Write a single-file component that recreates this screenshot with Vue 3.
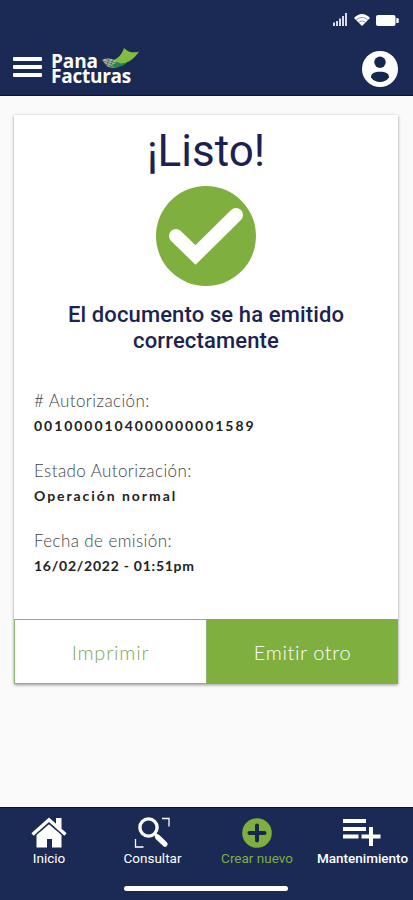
<script setup>
/**
 * @fileoverview Pantalla de confirmación de documento emitido.
 */

/** Datos del documento */
const fields = [
  { key: 'auth', label: '# Autorización:', value: '0010000104000000001589' },
  { key: 'status', label: 'Estado Autorización:', value: 'Operación normal' },
  { key: 'date', label: 'Fecha de emisión:', value: '16/02/2022 - 01:51pm' },
]

/** Opciones de la barra inferior */
const tabs = [
  { key: 'home', label: 'Inicio' },
  { key: 'search', label: 'Consultar' },
  { key: 'create', label: 'Crear nuevo', active: true },
  { key: 'manage', label: 'Mantenimiento' },
]
</script>

<template>
  <div class="screen">
    <header class="header">
      <div class="status">
        <svg class="signal" viewBox="0 0 14 13" fill="currentColor">
          <path d="M0 9.5h2V13H0zM3 8h2v5H3zM6 5.5h2V13H6zM9 3h2v10H9zM12 0h2v13h-2z" />
        </svg>
        <svg class="wifi" viewBox="0 0 16 12" fill="currentColor">
          <path d="M0 4Q8-4 16 4L8 12z" />
          <path d="M2.2 6Q8 .8 13.8 6M4.6 8.2Q8 5.4 11.4 8.2" fill="none" stroke="#1a2a55" stroke-width=".5" />
        </svg>
        <svg class="battery" viewBox="0 0 23 11" fill="currentColor">
          <rect width="19.5" height="11" rx="2" />
          <path d="M20.3 3h1a1.5 1.5 0 0 1 1.5 1.5v2A1.5 1.5 0 0 1 21.300 8h-1z" />
        </svg>
      </div>
      <div class="toolbar">
        <button class="menu" aria-label="Menú">
          <span /><span /><span />
        </button>
        <div class="logo">
          <span class="logo-top">Pana</span>
          <span class="logo-bottom">Facturas</span>
          <svg class="leaf" viewBox="0 0 37 20">
            <path d="M0 12C7 9 13 11 19 17C14 21 7 20 5 18z" fill="#a9bda0" />
            <path d="M1 13l15 5M4 11.500l14 5M3 16l8 3M7 11l-2 6M11 12l-3 7M15 14l-3 5" stroke="#35624c" stroke-width=".7" />
            <path d="M9 18.500C18 20 25 17 27 11L18 12z" fill="#23834b" />
            <path d="M10 12.500C16 11 20 6 22 0C27 5 32 5 37 3.500C33 10 27 15 19 15.500C16 14 13 13 10 12.500z" fill="#80bd42" />
          </svg>
        </div>
        <svg class="avatar" viewBox="0 0 36 36">
          <circle cx="18" cy="18" r="18" fill="#fff" />
          <circle cx="18" cy="11.300" r="5.700" fill="#17264f" />
          <path d="M9 26.300C9 22.500 12.500 20.800 18 20.800S27 22.500 27 26.300C25 29.600 22 31 18 31S11 29.600 9 26.300z" fill="#17264f" />
        </svg>
      </div>
    </header>

    <main class="content">
      <section class="card">
        <h1 class="title">¡Listo!</h1>
        <svg class="check" viewBox="0 0 100 100">
          <circle cx="50" cy="50" r="50" fill="#7eaf3f" />
          <path d="M20 50L39.500 69L80 29" fill="none" stroke="#fff" stroke-width="14" stroke-linecap="round" />
        </svg>
        <h2 class="message">
          El documento se ha emitido<br>
          correctamente
        </h2>

        <dl class="fields">
          <div v-for="f in fields" :key="f.key" :class="['field', `field--${f.key}`]">
            <dt>{{ f.label }}</dt>
            <dd>{{ f.value }}</dd>
          </div>
        </dl>

        <div class="actions">
          <button class="btn btn--outline">Imprimir</button>
          <button class="btn btn--solid">Emitir otro</button>
        </div>
      </section>
    </main>

    <nav class="tabbar">
      <div class="tabs">
        <a v-for="t in tabs" :key="t.key" :class="['tab', `tab--${t.key}`, { 'tab--active': t.active }]">
          <svg v-if="t.key === 'home'" viewBox="0 0 36 32" fill="currentColor">
            <path d="M18 7.200L30.500 18v12.500H21v-8.500h-5v8.500H5.500V18z" />
            <path d="M1.500 17.500L18 2.800L34.500 17.500" fill="none" stroke="currentColor" stroke-width="3.400" />
            <path d="M25 1h5.500v11l-5.500-4.500z" />
            <path d="M4.500 18L18 6.200L31.500 18" fill="none" stroke="#1a2a55" stroke-width="1" />
          </svg>
          <svg v-else-if="t.key === 'search'" viewBox="0 0 36 32" fill="none" stroke="currentColor">
            <circle cx="14.500" cy="10.500" r="8.600" stroke-width="3.400" />
            <path d="M20.500 16.500l3 3" stroke-width="3" />
            <path d="M23.500 20l7.500 7.200" stroke-width="5.200" stroke-linecap="round" />
            <path d="M28 1.500h7v8M1.500 22v8h8" stroke-width="1.300" />
          </svg>
          <svg v-else-if="t.key === 'create'" viewBox="0 0 36 32">
            <circle cx="18" cy="16" r="14.800" fill="currentColor" />
            <path d="M18 8.500v15M10.500 16h15" stroke="#17264f" stroke-width="4" stroke-linecap="round" />
          </svg>
          <svg v-else viewBox="0 0 38 32" fill="none" stroke="currentColor" stroke-width="4">
            <path d="M0 4h23M0 12h23M0 19.500h15.500M18.500 19.500h19M28 10v19" />
          </svg>
          <span class="tab-label">{{ t.label }}</span>
        </a>
      </div>
      <div class="home-indicator" />
    </nav>
  </div>
</template>

<style>
body { background: #fafafa; }
</style>

<style scoped>
.screen {
  display: flex;
  flex-direction: column;
  width: 413px;
  height: 900px;
  overflow: hidden;
  background: #fafafa;
  font-family: Roboto, sans-serif;
}

svg { display: block; flex-shrink: 0; }

button {
  border: 0;
  padding: 0;
  background: none;
}

/* ─── Cabecera ────────────────────────────────── */

.header {
  box-sizing: border-box;
  height: 96px;
  flex-shrink: 0;
  background: #1a2a55;
  border-bottom: 1px solid #100f42;
  color: #fff;
}

.status {
  display: flex;
  justify-content: flex-end;
  align-items: flex-end;
  height: 26px;
  padding-right: 14px;
}
.signal { width: 14px; height: 13px; margin-right: 7px; color: #d5dae5; }
.wifi { width: 16px; height: 12px; margin-right: 6px; }
.battery { width: 23px; height: 11px; }

.toolbar {
  display: flex;
  align-items: flex-start;
  padding: 22px 15px 0 13px;
}

.menu {
  display: flex;
  flex-direction: column;
  gap: 4px;
  width: 29px;
  margin-top: 9px;
}
.menu span { height: 4px; border-radius: 1px; background: #fff; }

.logo {
  position: relative;
  display: flex;
  flex-direction: column;
  margin: 6px auto 0 9px;
  font-family: "Open Sans", sans-serif;
  font-size: 19px;
  font-weight: 700;
  line-height: 15px;
}
.logo-top { letter-spacing: -0.1px; }
.logo-bottom { letter-spacing: -0.25px; }
.leaf { position: absolute; left: 51px; top: -6px; width: 37px; height: 20px; }

.avatar { width: 36px; height: 36px; margin-top: 3px; }

/* ─── Tarjeta ─────────────────────────────────── */

.content {
  flex: 1;
  padding: 19px 15px 0 14px;
}

.card {
  display: flex;
  flex-direction: column;
  align-items: center;
  height: 569px;
  background: #fff;
  box-shadow: 0 1px 3px rgba(0, 0, 0, 0.4);
}

.title {
  margin: 12px 0 0;
  font-size: 44px;
  font-weight: 400;
  line-height: 48px;
  color: #1b2152;
}

.check { width: 100px; height: 100px; margin-top: 11px; }

.message {
  margin: 16px 0 0;
  font-size: 22px;
  font-weight: 500;
  line-height: 26px;
  letter-spacing: 0.13px;
  text-align: center;
  white-space: nowrap;
  color: #1b2352;
}

.fields {
  box-sizing: border-box;
  width: 100%;
  margin: 34px 0 0;
  padding-left: 20px;
  display: flex;
  flex-direction: column;
  gap: 20px;
  font-family: Lato, sans-serif;
}
.field dt {
  font-size: 17px;
  font-weight: 300;
  line-height: 25px;
  letter-spacing: 0.4px;
  color: #444;
}
.field dd {
  margin: 0;
  font-size: 14px;
  font-weight: 700;
  line-height: 25px;
  letter-spacing: 1.95px;
  color: #222;
}
.field--date dd { letter-spacing: 0.75px; }

.actions {
  display: flex;
  width: 100%;
  height: 65px;
  margin-top: auto;
}

.btn {
  box-sizing: border-box;
  flex: 1;
  font-family: Lato, sans-serif;
  font-size: 20px;
  font-weight: 300;
  letter-spacing: 0.8px;
}
.btn--outline { border: 1px solid #8db56b; color: #7da853; }
.btn--solid { background: #7eaf3f; color: #fff; letter-spacing: 0.6px; }

/* ─── Barra inferior ──────────────────────────── */

.tabbar {
  box-sizing: border-box;
  height: 93px;
  flex-shrink: 0;
  background: #1a2a55;
  border-top: 1px solid #0c1231;
}

.tabs {
  display: grid;
  grid-template-columns: 98px 109px 100px 111px;
  padding-top: 9px;
}

.tab {
  display: flex;
  flex-direction: column;
  align-items: center;
  color: #fff;
}
.tab svg { width: 36px; height: 32px; }
.tab--search svg { margin-right: 2px; }
.tab--manage svg { width: 38px; margin-right: 1px; }
.tab--active { color: #7eaf3f; }

.tab-label {
  font-size: 13.5px;
  font-weight: 400;
  line-height: 19px;
  white-space: nowrap;
}
.tab--manage .tab-label { font-weight: 500; }

.home-indicator {
  width: 164px;
  height: 5px;
  margin: 18px 0 0 124px;
  border-radius: 3px;
  background: #fff;
}
</style>
